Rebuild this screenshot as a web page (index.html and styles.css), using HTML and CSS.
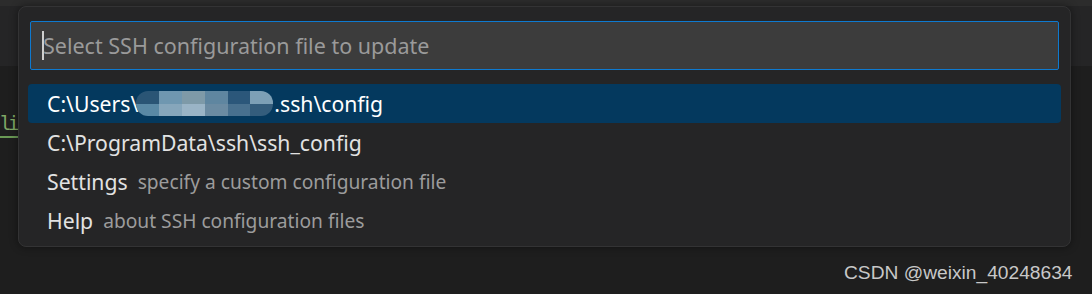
FILE: index.html
```html
<!DOCTYPE html>
<html>
<head>
<meta charset="utf-8">
<link rel="stylesheet" href="styles.css">
</head>
<body>
<div class="editor">
  <div class="tabs"></div>
  <div class="band"></div>
  <div class="code">
    <div class="line"><span class="tok">li</span></div>
  </div>
  <div class="watermark">CSDN @weixin_40248634</div>
</div>
<div class="quickpick">
  <div class="input"><span class="caret"></span><span class="placeholder">Select SSH configuration file to update</span></div>
  <div class="list">
    <div class="row selected"><span class="label">C:\Users\</span><span class="blur"><i style="background:#2a5575"></i><i style="background:#6f97b0"></i><i style="background:#7e9aa8"></i><i style="background:#5f86a0"></i><i style="background:#2b577a"></i><i style="background:#7da0b6"></i><i style="background:#5a89a5"></i><i style="background:#86a6bb"></i><i style="background:#9ab4c6"></i><i style="background:#6b8ba2"></i><i style="background:#48708e"></i><i style="background:#345d7c"></i></span><span class="label">.ssh\config</span></div>
    <div class="row"><span class="label">C:\ProgramData\ssh\ssh_config</span></div>
    <div class="row"><span class="label">Settings</span><span class="desc">specify a custom configuration file</span></div>
    <div class="row"><span class="label">Help</span><span class="desc">about SSH configuration files</span></div>
  </div>
</div>
</body>
</html>
```

FILE: styles.css
```css
html, body {
  margin: 0;
  padding: 0;
  width: 1092px;
  height: 294px;
  overflow: hidden;
  background: #1e1e1e;
  font-family: "Noto Sans", "Open Sans", sans-serif;
}
.editor {
  position: relative;
  width: 1092px;
  height: 294px;
  display: flex;
  flex-direction: column;
}
.tabs {
  height: 6px;
  background: #2c2c2c;
}
.band {
  height: 60px;
  background: #252526;
}
.code {
  padding-top: 44px;
}
.line {
  height: 28px;
  display: flex;
  align-items: center;
}
.tok {
  font-family: "DejaVu Sans Mono", monospace;
  font-size: 19px;
  color: #7fa866;
  border-bottom: 2px solid #6a9955;
  padding: 0 3px 0 0;
  line-height: 25px;
  letter-spacing: -3.5px;
}
.watermark {
  position: absolute;
  left: 844px;
  top: 262px;
  font-family: "Liberation Sans", Arial, sans-serif;
  font-size: 19.2px;
  color: #c8c8c8;
}
.quickpick {
  position: absolute;
  left: 18px;
  top: 6px;
  width: 1053px;
  height: 241px;
  box-sizing: border-box;
  background: #252526;
  border: 1px solid #333334;
  border-radius: 8px;
  box-shadow: 0 0 8px rgba(0,0,0,0.45);
  padding: 14px 9px 7px 9px;
}
.input {
  margin: 0 2px;
  height: 49px;
  box-sizing: border-box;
  background: #3c3c3c;
  border: 1px solid #0e7ad0;
  border-radius: 2px;
  display: flex;
  align-items: center;
  padding-left: 11px;
}
.caret {
  width: 2px;
  height: 29px;
  background: #cfcfcf;
  margin-right: -1px;
}
.placeholder {
  font-size: 21.5px;
  color: #9a9a9a;
}
.list {
  margin-top: 14px;
  display: flex;
  flex-direction: column;
}
.row {
  height: 39px;
  display: flex;
  align-items: center;
  padding-left: 19px;
  border-radius: 4px;
  white-space: nowrap;
}
.row.selected {
  background: #04395e;
}
.label {
  font-size: 21.2px;
  color: #e2e2e2;
}
.selected .label {
  color: #ffffff;
}
.desc {
  font-size: 19.2px;
  color: #9c9c9c;
  margin-left: 10px;
}
.blur {
  display: grid;
  grid-template-columns: repeat(6, 1fr);
  width: 137px;
  height: 25px;
  border-radius: 12px;
  overflow: hidden;
  margin: 0 1px 0 -2px;
  filter: blur(0.6px);
}
.blur i {
  display: block;
}
```
